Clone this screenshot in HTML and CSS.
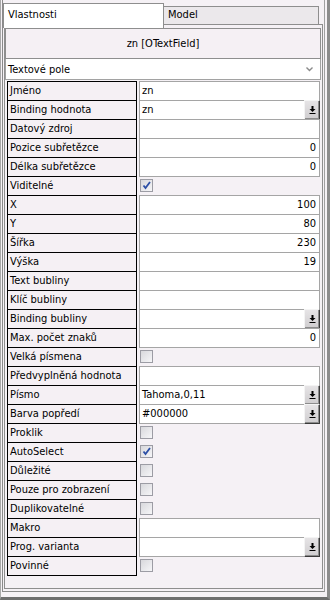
FILE: index.html
```html
<!DOCTYPE html>
<html lang="cs">
<head>
<meta charset="utf-8">
<title>Vlastnosti</title>
<link rel="stylesheet" href="styles.css">
</head>
<body>
<div class="window">
  <div class="frame">
    <div class="tabs">
      <div class="tab active">Vlastnosti</div>
      <div class="tab">Model</div>
    </div>
    <div class="panel">
      <div class="title">zn [OTextField]</div>
      <div class="select">
        <span>Textové pole</span>
        <svg class="chev" width="7" height="5" viewBox="0 0 7 5"><polyline points="0.5,0.5 3.5,3.5 6.5,0.5" fill="none" stroke="#8a8a8a" stroke-width="1.4"/></svg>
      </div>
      <div class="grid">
        <div class="lbl">Jméno</div><div class="val txt">zn</div>
        <div class="lbl">Binding hodnota</div><div class="val txt"><span>zn</span><span class="btn"><svg width="7" height="9" viewBox="0 0 7 9"><rect x="2.5" y="0" width="2" height="3"/><polygon points="0.5,3 6.5,3 3.5,6"/><rect x="0.5" y="7" width="6" height="1"/></svg></span></div>
        <div class="lbl">Datový zdroj</div><div class="val txt"></div>
        <div class="lbl">Pozice subřetězce</div><div class="val txt num">0</div>
        <div class="lbl">Délka subřetězce</div><div class="val txt num">0</div>
        <div class="lbl">Viditelné</div><div class="val"><span class="cb"><svg width="11" height="11" viewBox="0 0 11 11"><path d="M2.5 5.5 L4.5 8 L9 2" fill="none" stroke="#2c4fa6" stroke-width="1.8"/></svg></span></div>
        <div class="lbl">X</div><div class="val txt num">100</div>
        <div class="lbl">Y</div><div class="val txt num">80</div>
        <div class="lbl">Šířka</div><div class="val txt num">230</div>
        <div class="lbl">Výška</div><div class="val txt num">19</div>
        <div class="lbl">Text bubliny</div><div class="val txt"></div>
        <div class="lbl">Klíč bubliny</div><div class="val txt"></div>
        <div class="lbl">Binding bubliny</div><div class="val txt"><span></span><span class="btn"><svg width="7" height="9" viewBox="0 0 7 9"><rect x="2.5" y="0" width="2" height="3"/><polygon points="0.5,3 6.5,3 3.5,6"/><rect x="0.5" y="7" width="6" height="1"/></svg></span></div>
        <div class="lbl">Max. počet znaků</div><div class="val txt num">0</div>
        <div class="lbl">Velká písmena</div><div class="val"><span class="cb"></span></div>
        <div class="lbl">Předvyplněná hodnota</div><div class="val txt"></div>
        <div class="lbl">Písmo</div><div class="val txt"><span>Tahoma,0,11</span><span class="btn"><svg width="7" height="9" viewBox="0 0 7 9"><rect x="2.5" y="0" width="2" height="3"/><polygon points="0.5,3 6.5,3 3.5,6"/><rect x="0.5" y="7" width="6" height="1"/></svg></span></div>
        <div class="lbl">Barva popředí</div><div class="val txt"><span>#000000</span><span class="btn"><svg width="7" height="9" viewBox="0 0 7 9"><rect x="2.5" y="0" width="2" height="3"/><polygon points="0.5,3 6.5,3 3.5,6"/><rect x="0.5" y="7" width="6" height="1"/></svg></span></div>
        <div class="lbl">Proklik</div><div class="val"><span class="cb"></span></div>
        <div class="lbl">AutoSelect</div><div class="val"><span class="cb"><svg width="11" height="11" viewBox="0 0 11 11"><path d="M2.5 5.5 L4.5 8 L9 2" fill="none" stroke="#2c4fa6" stroke-width="1.8"/></svg></span></div>
        <div class="lbl">Důležité</div><div class="val"><span class="cb"></span></div>
        <div class="lbl">Pouze pro zobrazení</div><div class="val"><span class="cb"></span></div>
        <div class="lbl">Duplikovatelné</div><div class="val"><span class="cb"></span></div>
        <div class="lbl">Makro</div><div class="val txt"></div>
        <div class="lbl">Prog. varianta</div><div class="val txt"><span></span><span class="btn"><svg width="7" height="9" viewBox="0 0 7 9"><rect x="2.5" y="0" width="2" height="3"/><polygon points="0.5,3 6.5,3 3.5,6"/><rect x="0.5" y="7" width="6" height="1"/></svg></span></div>
        <div class="lbl last">Povinné</div><div class="val"><span class="cb"></span></div>
      </div>
    </div>
  </div>
</div>
</body>
</html>
```
FILE: styles.css
```css
html, body {
  margin: 0;
  padding: 0;
  background: #f5f1f5;
}
body {
  font-family: "DejaVu Sans Condensed", "Liberation Sans", Arial, sans-serif;
  font-size: 11px;
  color: #000;
}
.window {
  width: 330px;
  height: 600px;
  box-sizing: border-box;
  border-left: 1px solid #a8a8a8;
  border-right: 3px solid #8c8c8c;
  border-bottom: 3px solid #6e6e6e;
  padding: 0 2px 5px 1px;
  background: #f5f1f5;
}
.frame {
  height: 100%;
  box-sizing: border-box;
  border-left: 1px solid #8a8a8a;
  border-right: 1px solid #a0a0a0;
  border-bottom: 1px solid #8a8a8a;
  padding: 0 0 2px 0;
  display: flex;
  flex-direction: column;
}
.tabs {
  display: flex;
  height: 21px;
  margin-top: 3px;
  flex: none;
}
.tab {
  box-sizing: border-box;
  line-height: 17px;
  padding-left: 4px;
}
.tab.active {
  position: relative;
  z-index: 1;
  width: 161px;
  height: 25px;
  background: #ffffff;
  border: 1px solid #8e8e8e;
  border-bottom: none;
  padding-top: 2px;
  padding-left: 4px;
}
.tab:not(.active) {
  width: 155px;
  height: 18px;
  margin-top: 3px;
  background: #ebe8eb;
  border: 1px solid #8e8e8e;
  border-bottom: none;
  border-left: none;
  line-height: 16px;
}
.panel {
  flex: 1;
  margin: 0 1px 0 1px;
  border: 1px solid #8e8e8e;
  padding: 3px 1px 0 0;
  background: #f5f1f5;
}
.title {
  height: 31px;
  box-sizing: border-box;
  border: 1px solid #8e8e8e;
  background: #f5f0f4;
  text-align: center;
  line-height: 29px;
}
.select {
  height: 21px;
  box-sizing: border-box;
  border: 1px solid #a2a2a2;
  border-top: none;
  background: #ffffff;
  display: flex;
  align-items: center;
  justify-content: space-between;
  padding: 0 7px 0 2px;
}
.chev {
  display: block;
  margin-top: 1px;
}
.grid {
  margin: 1px 0 0 2px;
  display: grid;
  grid-template-columns: 130px 181px;
  column-gap: 2px;
  grid-auto-rows: 19px;
}
.lbl {
  box-sizing: border-box;
  height: 19px;
  border: 1px solid #000;
  border-bottom: none;
  background: #f5f0f4;
  line-height: 18px;
  padding-left: 2px;
  white-space: nowrap;
}
.lbl.last {
  height: 20px;
  border-bottom: 1px solid #000;
}
.val {
  box-sizing: border-box;
  height: 19px;
  display: flex;
  align-items: flex-start;
}
.val.txt {
  height: 20px;
  background: #ffffff;
  border: 1px solid #a5a5a5;
  line-height: 18px;
  padding-left: 2px;
  justify-content: space-between;
  position: relative;
}
.val.num {
  justify-content: flex-end;
  padding-right: 3px;
}
.btn {
  box-sizing: border-box;
  width: 16px;
  height: 20px;
  margin: -1px -1px -1px auto;
  background: linear-gradient(#e6e4e6, #cfcdcf);
  border-top: 1px solid #f4f4f4;
  border-left: 1px solid #f4f4f4;
  border-right: 1px solid #3a3a3a;
  border-bottom: 1px solid #3a3a3a;
  box-shadow: inset -1px -1px 0 #8c8c8c;
  display: flex;
  align-items: center;
  justify-content: center;
}
.btn svg {
  display: block;
  fill: #000;
}
.cb {
  box-sizing: border-box;
  width: 13px;
  height: 13px;
  margin: 3px 0 0 1px;
  border: 1px solid #9c9ca4;
  background: linear-gradient(135deg, #d8d8dc, #f6f6f8);
  display: flex;
  align-items: center;
  justify-content: center;
}
.cb svg {
  display: block;
}
```
